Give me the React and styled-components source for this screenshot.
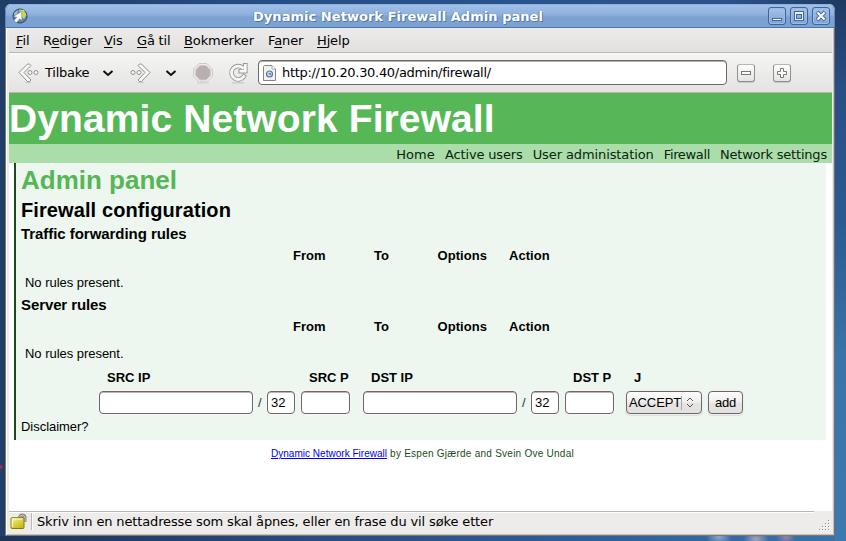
import React from "react";
import styled, { createGlobalStyle } from "styled-components";

const Global = createGlobalStyle`
  * { box-sizing: border-box; }
  html, body { margin: 0; height: 541px; overflow: hidden; }
`;

const Desktop = styled.div`
  width: 846px;
  height: 541px;
  padding: 4px 11px 5px 5px;
  background:
    radial-gradient(circle at 0.5px 467px, #9c2c45 0 1.5px, transparent 2.5px),
    radial-gradient(ellipse 13px 9px at 719px 537px, #b9c8dcaa, transparent),
    radial-gradient(ellipse 13px 8px at 756px 539px, #d0b6c8bb, transparent),
    radial-gradient(ellipse 10px 8px at 786px 537px, #c28ca5aa, transparent),
    linear-gradient(180deg, #1f3a62 0, #294f85 90px, #2b5a92 220px, #3975aa 360px, #3c79ae 541px) 835px 0 / 11px 541px no-repeat,
    linear-gradient(90deg, #203d66 0, #274f87 280px, #2a548e 600px, #2b5289 730px, #1e3a60 846px) 0 0 / 846px 4px no-repeat,
    linear-gradient(90deg, #1c3559 0, #274b7e 300px, #305f9a 600px, #3973a8 846px) 0 536px / 846px 5px no-repeat,
    #203e68;
  font: 13px/16px "DejaVu Sans", sans-serif;
  color: #000;
`;

const Window = styled.div`
  height: 532px;
  display: flex;
  flex-direction: column;
  background: #edeceb;
  border-radius: 6px 6px 0 0;
  overflow: hidden;
`;

const TitleBar = styled.header`
  height: 24px;
  flex: none;
  display: grid;
  grid-template-columns: 24px 1fr 66px;
  align-items: center;
  padding: 0 0 0 6px;
  border: 1px solid #5f86b5;
  border-top-color: #8db0dd;
  border-bottom-color: #4a76ae;
  border-radius: 6px 6px 0 0;
  background: linear-gradient(#a0c0e8, #8eb0dd 45%, #7ba2d2 55%, #7da2d2);
`;

const Title = styled.div`
  color: #fff;
  font-weight: bold;
  text-align: center;
  white-space: nowrap;
  padding-right: 8px;
  padding-top: 1px;
  text-shadow: 1px 1px 0 #5479aa, -1px 0 0 #658bbd;
  letter-spacing: 0.04px;
`;

const WinButtons = styled.div`
  display: flex;
  gap: 4px;
`;

const WinButton = styled.div`
  width: 18px;
  height: 18px;
  border: 1px solid #3e659b;
  border-radius: 3px;
  background: linear-gradient(#a5c2e8, #7fa4d3);
  box-shadow: inset 0 0 0 1px #9bbbe4;
  svg { display: block; }
`;

const Frame = styled.div`
  flex: 1;
  min-height: 0;
  display: flex;
  flex-direction: column;
  border: 1px solid #7e7974;
  border-top: 0;
  border-right-color: #6d6f75;
  box-shadow: inset 1px 0 0 #fff, inset -1px -1px 0 #c5c0bb;
  padding: 0 2px 1px 3px;
`;

const MenuBar = styled.nav`
  height: 25px;
  flex: none;
  display: flex;
  padding: 5px 0 0 7px;
  background: linear-gradient(#ecebea, #e2e1df);
  border-bottom: 1px solid #b9b7b4;
`;

const MenuItem = styled.div`
  width: ${(p) => p.$w}px;
  letter-spacing: ${(p) => p.$ls || 0}px;
  white-space: nowrap;
  u { text-underline-offset: 2px; text-decoration-thickness: 1px; }
`;

const ToolBar = styled.div`
  height: 40px;
  flex: none;
  display: flex;
  align-items: center;
  padding-left: 9px;
  background: linear-gradient(#fafafa 0, #f4f4f3 2px, #e4e3e1);
  border-bottom: 1px solid #b9b6b3;
  > svg { flex: none; }
`;

const BackLabel = styled.span`
  width: 57px;
  padding-left: 5px;
  letter-spacing: -0.25px;
  white-space: nowrap;
`;

const AddressField = styled.div`
  width: 469px;
  height: 25px;
  flex: none;
  display: flex;
  align-items: center;
  gap: 6px;
  padding-left: 4px;
  border: 1px solid #6e6762;
  border-radius: 4px;
  background: #fff;
  box-shadow: inset 0 1px 0 #b4b0ac;
  letter-spacing: -0.31px;
  white-space: nowrap;
`;

const ZoomButton = styled.div`
  width: 18px;
  height: 18px;
  margin-left: ${(p) => p.$gap}px;
  border: 1px solid #8e928b;
  border-top-color: #b5b8b2;
  border-radius: 3px;
  background: linear-gradient(#fff, #e4e4e2);
  box-shadow: 0 1px 0 #c8c7c5;
  svg { display: block; }
`;

const Page = styled.main`
  flex: 1;
  min-height: 0;
  background: #fff;
  font: 13px/16px "Liberation Sans", Arial, sans-serif;
`;

const Banner = styled.h1`
  height: 51px;
  margin: 0;
  background: #56b756;
  color: #fff;
  font-size: 39px;
  line-height: 51px;
  letter-spacing: 0.1px;
  white-space: nowrap;
`;

const SiteNav = styled.nav`
  height: 19px;
  display: flex;
  justify-content: flex-end;
  gap: 10px;
  padding-right: 5px;
  background: #aaddaa;
  font: 13px/21px "DejaVu Sans", sans-serif;
  color: #0c230c;
  white-space: nowrap;
`;

const NavLink = styled.span`
  letter-spacing: ${(p) => p.$ls || 0}px;
`;

const Content = styled.section`
  width: 812px;
  height: 277px;
  margin-left: 5px;
  padding-left: 5px;
  border-left: 2px solid #1e4a22;
  background: #edf7ef;
  display: flex;
  flex-direction: column;
`;

const Heading = styled.div`
  height: ${(p) => p.$h}px;
  line-height: ${(p) => p.$lh || 20}px;
  font-size: ${(p) => p.$size}px;
  font-weight: bold;
  letter-spacing: ${(p) => p.$ls || 0}px;
  color: ${(p) => (p.$green ? "#56b756" : "#000")};
  white-space: nowrap;
`;

const RuleHead = styled.div`
  height: 30px;
  padding: 4px 0 0 272px;
  display: grid;
  grid-template-columns: 81px 63.5px 71.5px 60px;
  font-weight: bold;
  letter-spacing: 0.05px;
`;

const Note = styled.div`
  height: ${(p) => p.$h}px;
  padding: ${(p) => p.$top || 0}px 0 0 ${(p) => p.$indent || 0}px;
  letter-spacing: -0.03px;
`;

const FormHead = styled.div`
  height: 21px;
  padding-left: 86px;
  display: grid;
  grid-template-columns: 202px 62px 202px 61px 60px;
  font-weight: bold;
  span { white-space: nowrap; }
`;

const FormRow = styled.form`
  height: 27px;
  padding-left: 78px;
  display: flex;
  align-items: flex-start;
`;

const Field = styled.input`
  width: ${(p) => p.$w}px;
  height: 23px;
  margin: 0 ${(p) => p.$after || 0}px 0 0;
  padding: 0 3px;
  border: 1px solid #6e6768;
  border-radius: 4px;
  background: #fff;
  box-shadow: 0 0 0 1px #f8f7f7, inset 0 1px 0 #b9b6b6;
  font: 13px "Liberation Sans", Arial, sans-serif;
  outline: none;
`;

const Slash = styled.span`
  width: 14px;
  padding-left: 5px;
  line-height: 24px;
  color: #333;
`;

const SelectBox = styled.div`
  width: 76px;
  height: 23px;
  margin-right: 6px;
  display: flex;
  align-items: center;
  padding-left: 2px;
  border: 1px solid #6e6768;
  border-radius: 4px;
  background: linear-gradient(#fdfdfd, #f0efee 48%, #e5e4e3 52%, #e2e1e0);
  box-shadow: 0 0 0 1px #f0f1ef, 0 1px 1px 1px #d9dfd9;
  letter-spacing: -0.1px;
  svg { flex: none; }
`;

const AddButton = styled.button`
  width: 35px;
  height: 23px;
  padding: 0;
  border: 1px solid #6e6768;
  border-radius: 4px;
  background: linear-gradient(#fdfdfd, #f0efee 48%, #e5e4e3 52%, #e2e1e0);
  box-shadow: 0 0 0 1px #f0f1ef, 0 1px 1px 1px #d9dfd9;
  font: 13px "Liberation Sans", Arial, sans-serif;
  letter-spacing: -0.2px;
  color: #000;
`;

const Credits = styled.footer`
  padding: 8px 0 0 262px;
  font-size: 10px;
  line-height: 12px;
  letter-spacing: 0.25px;
  color: #1e4a22;
  white-space: nowrap;
  a { color: #0000ee; text-decoration: underline; letter-spacing: 0.02px; }
`;

const StatusBar = styled.footer`
  height: 23px;
  flex: none;
  display: flex;
  align-items: flex-start;
  padding-top: 2px;
  background: linear-gradient(90deg, #b9b7b5 805px, transparent 805px) 0 0 / 100% 1px no-repeat,
    linear-gradient(90deg, #fff 805px, transparent 805px) 0 1px / 100% 1px no-repeat, #edeceb;
`;

const StatusText = styled.span`
  flex: 1;
  margin-left: 4px;
  padding-left: 5px;
  height: 17px;
  line-height: 17px;
  border-left: 1px solid #bbb8b5;
  box-shadow: inset 1px 0 0 #fff;
  letter-spacing: -0.14px;
  white-space: nowrap;
`;

const AppIcon = () => (
  <svg width="16" height="16" viewBox="0 0 16 16">
    <circle cx="8" cy="8" r="7" fill="#5c86a8" stroke="#27466b" />
    <path d="M7 1.5L12 2L14.5 7L12 11L9 8L8 5Z" fill="#c5d65a" />
    <path d="M2 5L6 2L5 6L3 8Z" fill="#a9bfd0" />
    <path d="M9.5 3.5L10 12.5L7.6 10.8L4.8 14.5L1.8 13L4.8 9.2L1.5 8.5Z" fill="#fff" stroke="#6d8296" strokeWidth=".5" />
  </svg>
);

const Arrow = ({ forward }) => (
  <svg width="22" height="22" viewBox="0 0 22 22">
    <g transform={forward ? "translate(22 0) scale(-1 1)" : undefined} fill="#f7f7f6" stroke="#8f918e">
      <path d="M7 20.5h6" stroke="#c9c8c6" />
      <path d="M9.5 2L1 10.5L9.5 19.5H11.5L13 18L6 10.5L13 3.5L11.5 2Z" strokeLinejoin="round" />
      <circle cx="12" cy="10.5" r="2" />
      <circle cx="18" cy="10.5" r="2" />
    </g>
  </svg>
);

const Chevron = () => (
  <svg width="12" height="8" viewBox="0 0 12 8">
    <path d="M1.5 2L6 6L10.5 2" fill="none" stroke="#111" strokeWidth="2" />
  </svg>
);

const StopIcon = () => (
  <svg width="20" height="22" viewBox="0 0 20 22">
    <path d="M4 21H16" stroke="#d3d2d0" />
    <path d="M6.2 1.5H13.8L19.3 7V14.5L13.8 20H6.2L.7 14.5V7Z" fill="#efeeed" stroke="#cbc9c7" />
    <path d="M7 3.5H13L17.3 7.8V13.7L13 18H7L2.7 13.7V7.8Z" fill="#b9afae" stroke="#d0c9c8" />
  </svg>
);

const ReloadIcon = () => (
  <svg width="21" height="22" viewBox="0 0 21 22" fill="none">
    <path d="M4 20.9H16" stroke="#c4c3c1" />
    <g stroke="#979895" strokeWidth="4.6">
      <path d="M14.5 5.6A6.7 6.7 0 1 0 15.8 14.5" strokeLinecap="square" />
      <path d="M17.3 1V9.2H10.5" />
    </g>
    <g stroke="#f7f7f6" strokeWidth="2.8">
      <path d="M14.5 5.6A6.7 6.7 0 1 0 15.8 14.5" strokeLinecap="square" />
      <path d="M17.3 2V9.2H11.5" />
    </g>
  </svg>
);

const PageIcon = () => (
  <svg width="13" height="16" viewBox="0 0 13 16">
    <path d="M1.5.5H9L12.5 4V15.5H.5V1.5Z" fill="#f1f1ef" stroke="#85877f" />
    <path d="M9 .5V4H12.5" fill="#fff" stroke="#aaa" />
    <circle cx="6.5" cy="9" r="3" fill="#c9d6e8" stroke="#5877a6" strokeWidth="1.2" />
    <path d="M5.5 8L8 8L7.5 10.5Z" fill="#5877a6" />
  </svg>
);

const LockIcon = () => (
  <svg width="17" height="17" viewBox="0 0 17 17">
    <path d="M9.8 6V4A2.7 2.7 0 0 1 15 4V9" fill="none" stroke="#81817d" strokeWidth="3" />
    <path d="M9.8 6V4A2.7 2.7 0 0 1 15 4V9" fill="none" stroke="#d0d0cd" />
    <defs>
      <linearGradient id="brass" x2=".7" y2="1">
        <stop stopColor="#fbf6b9" />
        <stop offset=".5" stopColor="#e0d54c" />
        <stop offset="1" stopColor="#c5b816" />
      </linearGradient>
    </defs>
    <rect x="1" y="4.7" width="13" height="10.8" rx="1" fill="url(#brass)" stroke="#8a7a05" />
    <path d="M2.3 6H12.5M2.3 6V14" stroke="#fffbd0" fill="none" />
  </svg>
);

const Grip = () => (
  <svg width="12" height="12" viewBox="0 0 12 12">
    {[[9, 0], [6, 3], [9, 3], [3, 6], [6, 6], [9, 6], [0, 9], [3, 9], [6, 9], [9, 9]].map(([x, y]) => (
      <g key={`${x}-${y}`}>
        <rect x={x + 1} y={y + 1} width="1" height="1" fill="#fff" />
        <rect x={x} y={y} width="1" height="1" fill="#8f8c88" />
      </g>
    ))}
  </svg>
);

const Spacer = styled.span`
  width: ${(p) => p.$w}px;
  flex: none;
`;

const GripSlot = styled.span`
  padding: 7px 1px 0 0;
  svg { display: block; }
`;

const menu = [
  ["", "F", "il", 27, -0.1],
  ["R", "e", "diger", 61, -0.05],
  ["", "V", "is", 33, -0.1],
  ["", "G", "å til", 47, -0.2],
  ["", "B", "okmerker", 84, -0.1],
  ["F", "a", "ner", 49, -0.1],
  ["", "H", "jelp", 50, -0.15],
];

const nav = [
  ["Home", 0.1],
  ["Active users", -0.15],
  ["User administation", -0.1],
  ["Firewall", -0.35],
  ["Network settings", -0.2],
];

const Rules = () => (
  <RuleHead>
    <span>From</span>
    <span>To</span>
    <span>Options</span>
    <span>Action</span>
  </RuleHead>
);

export default function App() {
  return (
    <Desktop>
      <Global />
      <Window>
        <TitleBar>
          <AppIcon />
          <Title>Dynamic Network Firewall Admin panel</Title>
          <WinButtons>
            <WinButton>
              <svg width="16" height="16"><rect x="3.5" y="10.5" width="9" height="2" fill="#fff" stroke="#42699f" /></svg>
            </WinButton>
            <WinButton>
              <svg width="16" height="16">
                <rect x="3.5" y="3.5" width="9" height="9" fill="#e9f1fb" stroke="#42699f" />
                <rect x="5.5" y="6.5" width="5" height="4" fill="#91b1dc" stroke="#42699f" />
              </svg>
            </WinButton>
            <WinButton>
              <svg width="16" height="16">
                <path d="M4 4L12 12M12 4L4 12" stroke="#42699f" strokeWidth="4" />
                <path d="M4.5 4.5L11.5 11.5M11.5 4.5L4.5 11.5" stroke="#fff" strokeWidth="2.2" />
              </svg>
            </WinButton>
          </WinButtons>
        </TitleBar>
        <Frame>
          <MenuBar>
            {menu.map(([pre, key, post, w, ls]) => (
              <MenuItem key={key + post} $w={w} $ls={ls}>{pre}<u>{key}</u>{post}</MenuItem>
            ))}
          </MenuBar>
          <ToolBar>
            <Arrow />
            <BackLabel>Tilbake</BackLabel>
            <Spacer $w={5} />
            <Chevron />
            <Spacer $w={15} />
            <Arrow forward />
            <Spacer $w={14} />
            <Chevron />
            <Spacer $w={16} />
            <StopIcon />
            <Spacer $w={15} />
            <ReloadIcon />
            <Spacer $w={9} />
            <AddressField>
              <PageIcon />
              <span>http://10.20.30.40/admin/firewall/</span>
            </AddressField>
            <ZoomButton $gap={10}>
              <svg width="16" height="16"><rect x="3.5" y="6.5" width="9" height="3" fill="#fff" stroke="#747972" /></svg>
            </ZoomButton>
            <ZoomButton $gap={18}>
              <svg width="16" height="16">
                <path d="M6.5 3.5H9.5V6.5H12.5V9.5H9.5V12.5H6.5V9.5H3.5V6.5H6.5Z" fill="#fff" stroke="#747972" />
              </svg>
            </ZoomButton>
          </ToolBar>
          <Page>
            <Banner>Dynamic Network Firewall</Banner>
            <SiteNav>
              {nav.map(([label, ls]) => (
                <NavLink key={label} $ls={ls}>{label}</NavLink>
              ))}
            </SiteNav>
            <Content>
              <Heading $h={34} $size={26} $lh={34} $green>Admin panel</Heading>
              <Heading $h={27} $size={20} $lh={27} $ls={0.1}>Firewall configuration</Heading>
              <Heading $h={20} $size={15} $lh={20} $ls={-0.05}>Traffic forwarding rules</Heading>
              <Rules />
              <Note $h={21} $top={1} $indent={4}>No rules present.</Note>
              <Heading $h={20} $size={15} $lh={20} $ls={-0.1}>Server rules</Heading>
              <Rules />
              <Note $h={25} $top={1} $indent={4}>No rules present.</Note>
              <FormHead>
                <span>SRC IP</span>
                <span>SRC P</span>
                <span>DST IP</span>
                <span>DST P</span>
                <span>J</span>
              </FormHead>
              <FormRow>
                <Field $w={154} />
                <Slash>/</Slash>
                <Field $w={28} $after={6} defaultValue="32" />
                <Field $w={49} $after={13} />
                <Field $w={154} />
                <Slash>/</Slash>
                <Field $w={28} $after={6} defaultValue="32" />
                <Field $w={49} $after={12} />
                <SelectBox>
                  ACCEPT
                  <svg width="18" height="17" viewBox="0 0 18 17">
                    <path d="M.5 2V16" stroke="#aaa8a6" />
                    <path d="M6 7L9 4L12 7M6 10L9 13L12 10" fill="none" stroke="#555" />
                  </svg>
                </SelectBox>
                <AddButton type="button">add</AddButton>
              </FormRow>
              <Note $h={17} $top={1}>Disclaimer?</Note>
            </Content>
            <Credits>
              <a>Dynamic Network Firewall</a> by Espen Gjærde and Svein Ove Undal
            </Credits>
          </Page>
          <StatusBar>
            <Spacer $w={1} />
            <LockIcon />
            <StatusText>Skriv inn en nettadresse som skal åpnes, eller en frase du vil søke etter</StatusText>
            <GripSlot><Grip /></GripSlot>
          </StatusBar>
        </Frame>
      </Window>
    </Desktop>
  );
}
